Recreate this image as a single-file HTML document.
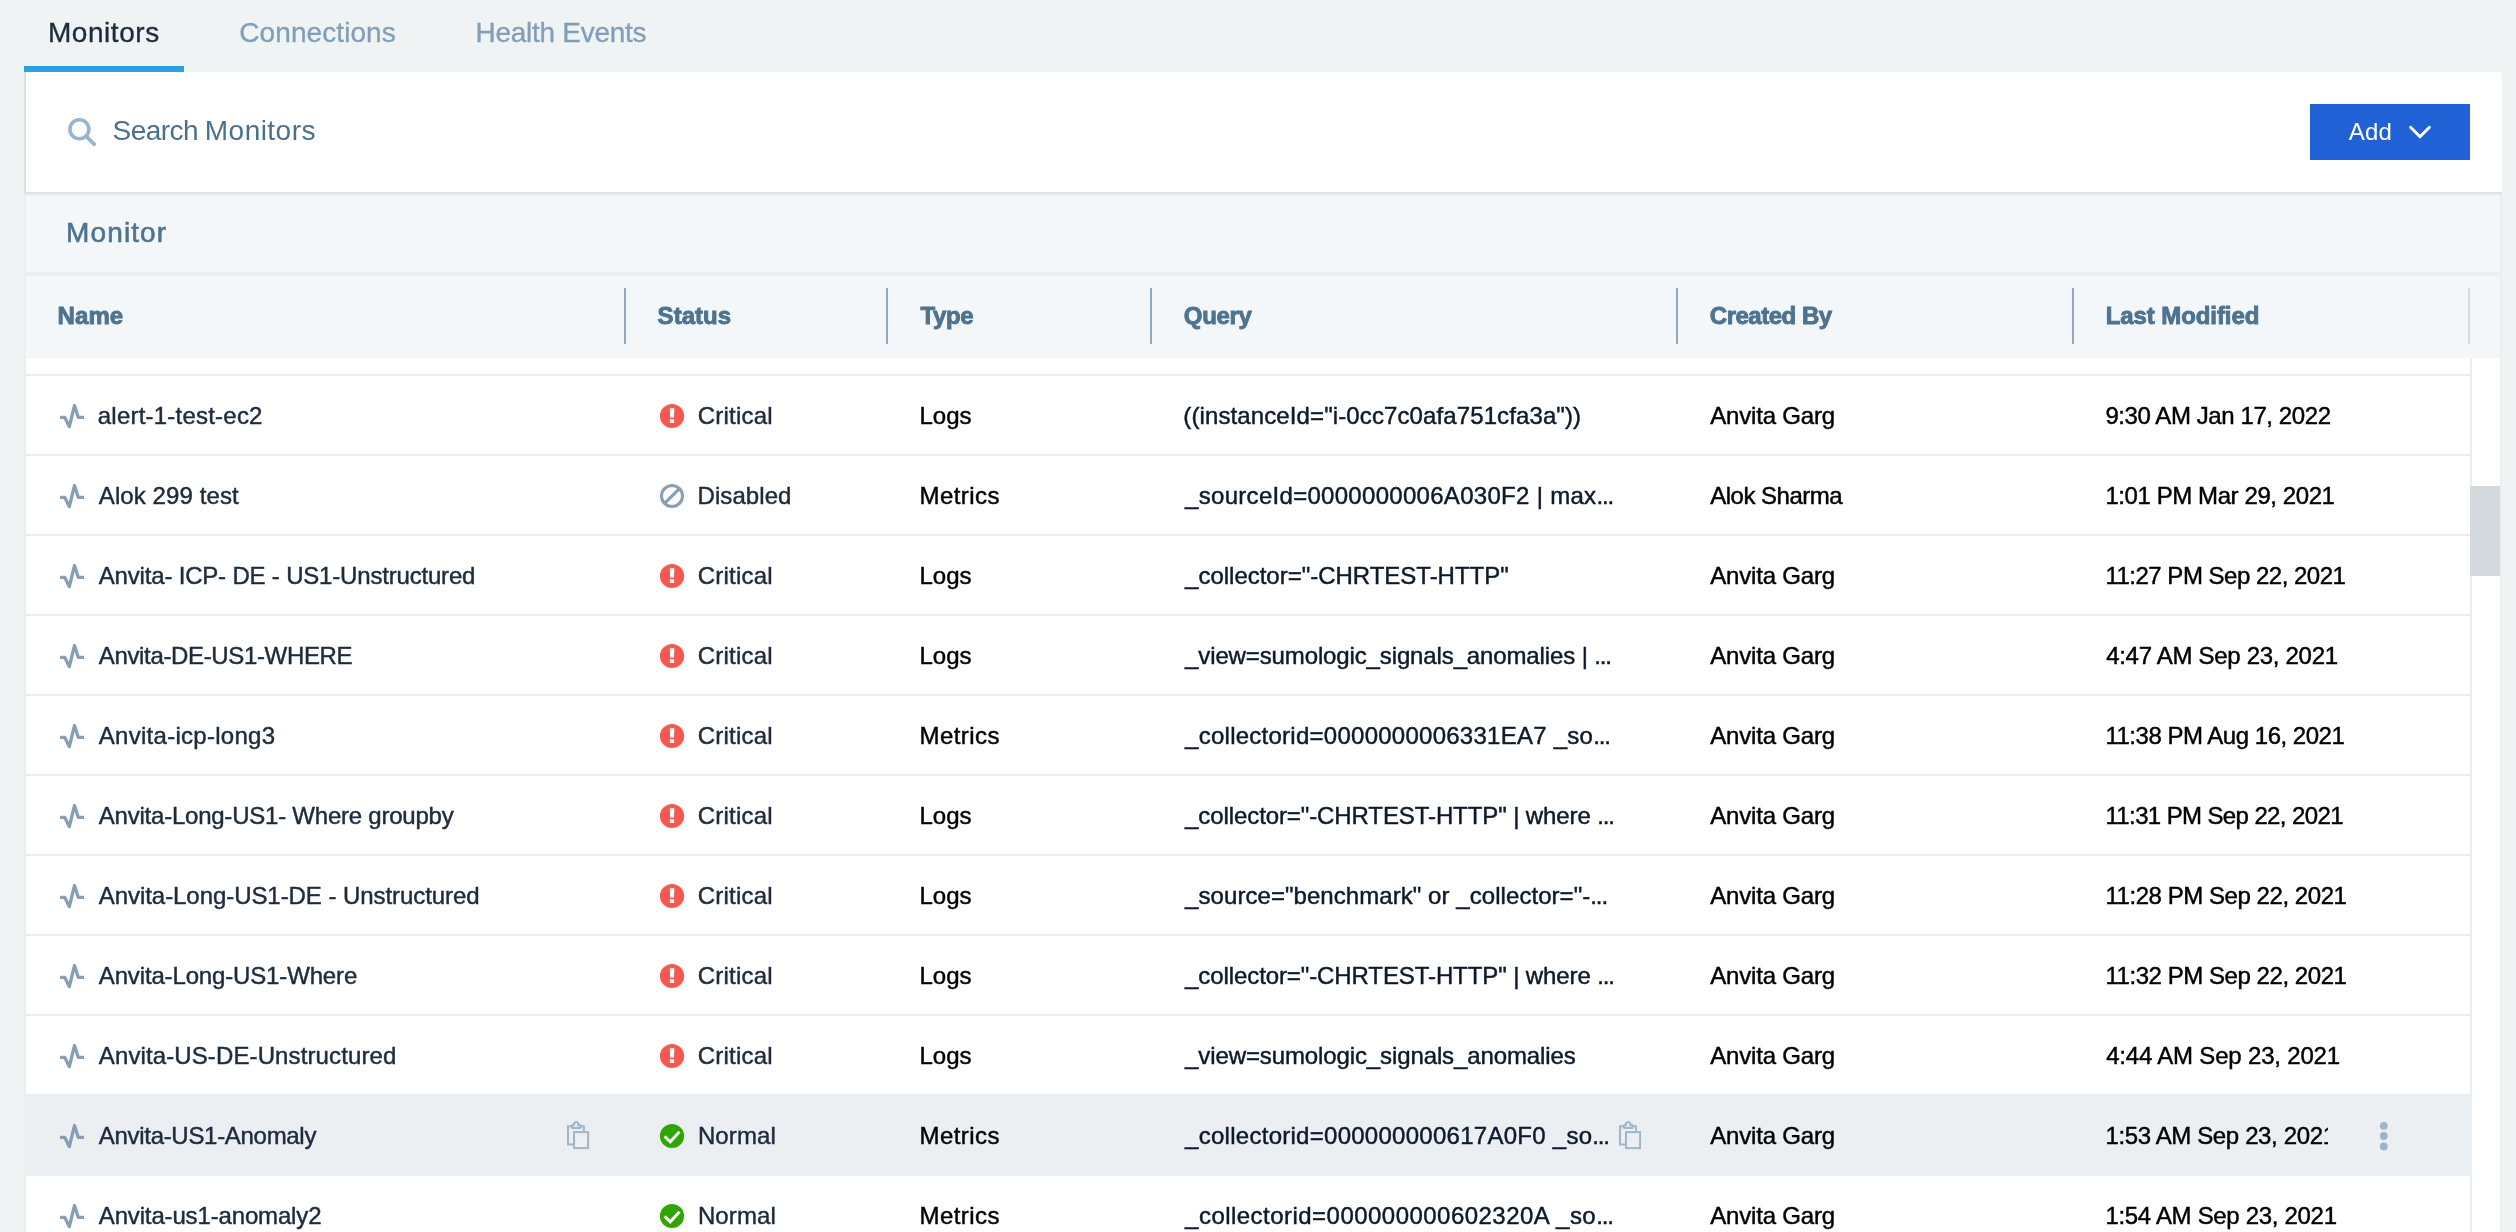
<!DOCTYPE html>
<html><head><meta charset="utf-8"><title>Monitors</title>
<style>
html,body{margin:0;padding:0}
body{width:2516px;height:1232px;overflow:hidden;background:#eff3f4;position:relative;font-family:"Liberation Sans",sans-serif}
.t{position:absolute;line-height:1;white-space:pre;font-weight:400}
.b{font-weight:700}
.abs,.ic,.rl{position:absolute}
.rl{left:26px;width:2444px;height:2px;background:#e8edf2}
.sep{position:absolute;top:288px;width:2px;height:56px;background:#8fa9bf}
</style></head><body>
<div class="abs" style="left:24px;top:66px;width:160px;height:6px;background:#2b9fe5"></div>
<div class="abs" style="left:24px;top:72px;width:2476px;height:120px;background:#fff;border-left:2px solid #dbe2ea;border-bottom:2px solid #dbe2ea;border-radius:0 4px 0 0"></div>
<div class="abs" style="left:24px;top:194px;width:2474px;height:1040px;background:#fff;border:2px solid #ebeff2"></div>
<div class="abs" style="left:26px;top:196px;width:2474px;height:76px;background:#f4f7fa"></div>
<div class="abs" style="left:26px;top:272px;width:2474px;height:4px;background:#e9eef2"></div>
<div class="abs" style="left:26px;top:276px;width:2444px;height:82px;background:#f4f7fa"></div>
<div class="abs" style="left:2470px;top:276px;width:30px;height:82px;background:#f4f6f7"></div>
<div class="abs" style="left:2470px;top:358px;width:2px;height:874px;background:#e9eef2"></div>
<div class="abs" style="left:2470px;top:486px;width:30px;height:90px;background:#d4d9de"></div>
<div class="rl" style="top:374px"></div><div class="rl" style="top:454px"></div><div class="rl" style="top:534px"></div><div class="rl" style="top:614px"></div><div class="rl" style="top:694px"></div><div class="rl" style="top:774px"></div><div class="rl" style="top:854px"></div><div class="rl" style="top:934px"></div><div class="rl" style="top:1014px"></div>
<div class="abs" style="left:26px;top:1094px;width:2444px;height:82px;background:#ebeff2"></div>
<div class="sep" style="left:624px"></div><div class="sep" style="left:886px"></div><div class="sep" style="left:1150px"></div><div class="sep" style="left:1676px"></div><div class="sep" style="left:2072px"></div>
<div class="sep" style="left:2468px;background:#d5dce2"></div>
<div class="abs" style="left:2310px;top:104px;width:160px;height:56px;background:#2062d6"></div>
<svg class="ic" style="left:2404px;top:120px" width="32" height="24" viewBox="0 0 32 24"><path d="M6.6 7.3L16 16.7L25.4 7.3" fill="none" stroke="#fff" stroke-width="3" stroke-linecap="round" stroke-linejoin="round"/></svg>
<svg class="ic" style="left:64px;top:114px" width="36" height="36" viewBox="0 0 36 36"><circle cx="15.4" cy="15.3" r="9.5" fill="none" stroke="#9cb4ca" stroke-width="3.6"/><path d="M22.3 22.3L30.1 30.1" stroke="#9cb4ca" stroke-width="3.9" stroke-linecap="round"/></svg>
<svg class="ic" style="left:60px;top:404px" width="24" height="25" viewBox="0 0 24 25"><path d="M0 13.4H4.8L9.3 22.6L14.5 1.6L18.3 13.4H24" fill="none" stroke="#879fb6" stroke-width="3.35" stroke-linejoin="round"/></svg>
<svg class="ic" style="left:659px;top:403px" width="26" height="26" viewBox="0 0 26 26"><circle cx="13" cy="13" r="12.1" fill="#f5584f"/><path d="M10.8 5.3h4.6l-.45 9.3h-3.7z M10.9 16.2h4.3v3.7h-4.3z" fill="#fff"/></svg>
<svg class="ic" style="left:60px;top:484px" width="24" height="25" viewBox="0 0 24 25"><path d="M0 13.4H4.8L9.3 22.6L14.5 1.6L18.3 13.4H24" fill="none" stroke="#879fb6" stroke-width="3.35" stroke-linejoin="round"/></svg>
<svg class="ic" style="left:659px;top:483px" width="26" height="26" viewBox="0 0 26 26"><circle cx="13" cy="13" r="10.55" fill="none" stroke="#879fb7" stroke-width="3.1"/><path d="M5.6 20.4L20.4 5.6" stroke="#879fb7" stroke-width="3.1"/></svg>
<svg class="ic" style="left:60px;top:564px" width="24" height="25" viewBox="0 0 24 25"><path d="M0 13.4H4.8L9.3 22.6L14.5 1.6L18.3 13.4H24" fill="none" stroke="#879fb6" stroke-width="3.35" stroke-linejoin="round"/></svg>
<svg class="ic" style="left:659px;top:563px" width="26" height="26" viewBox="0 0 26 26"><circle cx="13" cy="13" r="12.1" fill="#f5584f"/><path d="M10.8 5.3h4.6l-.45 9.3h-3.7z M10.9 16.2h4.3v3.7h-4.3z" fill="#fff"/></svg>
<svg class="ic" style="left:60px;top:644px" width="24" height="25" viewBox="0 0 24 25"><path d="M0 13.4H4.8L9.3 22.6L14.5 1.6L18.3 13.4H24" fill="none" stroke="#879fb6" stroke-width="3.35" stroke-linejoin="round"/></svg>
<svg class="ic" style="left:659px;top:643px" width="26" height="26" viewBox="0 0 26 26"><circle cx="13" cy="13" r="12.1" fill="#f5584f"/><path d="M10.8 5.3h4.6l-.45 9.3h-3.7z M10.9 16.2h4.3v3.7h-4.3z" fill="#fff"/></svg>
<svg class="ic" style="left:60px;top:724px" width="24" height="25" viewBox="0 0 24 25"><path d="M0 13.4H4.8L9.3 22.6L14.5 1.6L18.3 13.4H24" fill="none" stroke="#879fb6" stroke-width="3.35" stroke-linejoin="round"/></svg>
<svg class="ic" style="left:659px;top:723px" width="26" height="26" viewBox="0 0 26 26"><circle cx="13" cy="13" r="12.1" fill="#f5584f"/><path d="M10.8 5.3h4.6l-.45 9.3h-3.7z M10.9 16.2h4.3v3.7h-4.3z" fill="#fff"/></svg>
<svg class="ic" style="left:60px;top:804px" width="24" height="25" viewBox="0 0 24 25"><path d="M0 13.4H4.8L9.3 22.6L14.5 1.6L18.3 13.4H24" fill="none" stroke="#879fb6" stroke-width="3.35" stroke-linejoin="round"/></svg>
<svg class="ic" style="left:659px;top:803px" width="26" height="26" viewBox="0 0 26 26"><circle cx="13" cy="13" r="12.1" fill="#f5584f"/><path d="M10.8 5.3h4.6l-.45 9.3h-3.7z M10.9 16.2h4.3v3.7h-4.3z" fill="#fff"/></svg>
<svg class="ic" style="left:60px;top:884px" width="24" height="25" viewBox="0 0 24 25"><path d="M0 13.4H4.8L9.3 22.6L14.5 1.6L18.3 13.4H24" fill="none" stroke="#879fb6" stroke-width="3.35" stroke-linejoin="round"/></svg>
<svg class="ic" style="left:659px;top:883px" width="26" height="26" viewBox="0 0 26 26"><circle cx="13" cy="13" r="12.1" fill="#f5584f"/><path d="M10.8 5.3h4.6l-.45 9.3h-3.7z M10.9 16.2h4.3v3.7h-4.3z" fill="#fff"/></svg>
<svg class="ic" style="left:60px;top:964px" width="24" height="25" viewBox="0 0 24 25"><path d="M0 13.4H4.8L9.3 22.6L14.5 1.6L18.3 13.4H24" fill="none" stroke="#879fb6" stroke-width="3.35" stroke-linejoin="round"/></svg>
<svg class="ic" style="left:659px;top:963px" width="26" height="26" viewBox="0 0 26 26"><circle cx="13" cy="13" r="12.1" fill="#f5584f"/><path d="M10.8 5.3h4.6l-.45 9.3h-3.7z M10.9 16.2h4.3v3.7h-4.3z" fill="#fff"/></svg>
<svg class="ic" style="left:60px;top:1044px" width="24" height="25" viewBox="0 0 24 25"><path d="M0 13.4H4.8L9.3 22.6L14.5 1.6L18.3 13.4H24" fill="none" stroke="#879fb6" stroke-width="3.35" stroke-linejoin="round"/></svg>
<svg class="ic" style="left:659px;top:1043px" width="26" height="26" viewBox="0 0 26 26"><circle cx="13" cy="13" r="12.1" fill="#f5584f"/><path d="M10.8 5.3h4.6l-.45 9.3h-3.7z M10.9 16.2h4.3v3.7h-4.3z" fill="#fff"/></svg>
<svg class="ic" style="left:60px;top:1124px" width="24" height="25" viewBox="0 0 24 25"><path d="M0 13.4H4.8L9.3 22.6L14.5 1.6L18.3 13.4H24" fill="none" stroke="#879fb6" stroke-width="3.35" stroke-linejoin="round"/></svg>
<svg class="ic" style="left:659px;top:1123px" width="26" height="26" viewBox="0 0 26 26"><circle cx="13" cy="13" r="12.1" fill="#2fa500"/><path d="M5.6 13.4L11.3 18.8L20.5 8.8" fill="none" stroke="#ebeff3" stroke-width="3"/></svg>
<svg class="ic" style="left:60px;top:1204px" width="24" height="25" viewBox="0 0 24 25"><path d="M0 13.4H4.8L9.3 22.6L14.5 1.6L18.3 13.4H24" fill="none" stroke="#879fb6" stroke-width="3.35" stroke-linejoin="round"/></svg>
<svg class="ic" style="left:659px;top:1203px" width="26" height="26" viewBox="0 0 26 26"><circle cx="13" cy="13" r="12.1" fill="#2fa500"/><path d="M5.6 13.4L11.3 18.8L20.5 8.8" fill="none" stroke="#fff" stroke-width="3"/></svg>
<svg class="ic" style="left:566px;top:1120px" width="24" height="30" viewBox="0 0 24 30"><g fill="none" stroke="#9fb5ca" stroke-width="2"><path d="M6 6.2H2V24.4H7"/><path d="M14.6 6.2H17.9V11.1"/><path d="M6.1 7.9V5.3H8A2.3 2.3 0 1 1 12.2 5.3H14.5V7.9Z" stroke-linejoin="round"/><rect x="8" y="12.1" width="14.1" height="16"/></g></svg><svg class="ic" style="left:1618px;top:1120px" width="24" height="30" viewBox="0 0 24 30"><g fill="none" stroke="#9fb5ca" stroke-width="2"><path d="M6 6.2H2V24.4H7"/><path d="M14.6 6.2H17.9V11.1"/><path d="M6.1 7.9V5.3H8A2.3 2.3 0 1 1 12.2 5.3H14.5V7.9Z" stroke-linejoin="round"/><rect x="8" y="12.1" width="14.1" height="16"/></g></svg>
<svg class="ic" style="left:2376px;top:1120px" width="16" height="32" viewBox="0 0 16 32"><g fill="#9db4c9"><circle cx="7.8" cy="5.8" r="3.9"/><circle cx="7.8" cy="16" r="3.9"/><circle cx="7.8" cy="26.4" r="3.9"/></g></svg>
<div class="abs" style="left:0;top:0;width:2516px;height:1232px;will-change:transform">
<span class="t" style="left:47.9px;top:19.0px;font-size:28px;letter-spacing:0.557px;color:#1d2b3c;-webkit-text-stroke:0.35px #1d2b3c">Monitors</span>
<span class="t" style="left:239.3px;top:19.0px;font-size:28px;letter-spacing:0.080px;color:#839eb7;-webkit-text-stroke:0.35px #839eb7">Connections</span>
<span class="t" style="left:475.6px;top:19.0px;font-size:28px;letter-spacing:-0.283px;color:#839eb7;-webkit-text-stroke:0.35px #839eb7">Health Events</span>
<span class="t" style="left:112.5px;top:117.0px;font-size:28px;letter-spacing:-0.510px;color:#49708f">Search</span>
<span class="t" style="left:204.8px;top:117.0px;font-size:28px;letter-spacing:0.471px;color:#49708f">Monitors</span>
<span class="t" style="left:2348.8px;top:120.0px;font-size:24px;letter-spacing:0.125px;color:#ffffff">Add</span>
<span class="t" style="left:66.1px;top:219.0px;font-size:28px;letter-spacing:1.108px;color:#4e738f;-webkit-text-stroke:0.6px #4e738f">Monitor</span>
<span class="t b" style="left:57.6px;top:304.2px;font-size:24px;letter-spacing:0.083px;color:#4e738f;-webkit-text-stroke:0.9px #4e738f">Name</span>
<span class="t b" style="left:657.6px;top:304.2px;font-size:24px;letter-spacing:0.040px;color:#4e738f;-webkit-text-stroke:0.9px #4e738f">Status</span>
<span class="t b" style="left:920.5px;top:304.2px;font-size:24px;letter-spacing:-0.367px;color:#4e738f;-webkit-text-stroke:0.9px #4e738f">Type</span>
<span class="t b" style="left:1183.8px;top:304.2px;font-size:24px;letter-spacing:-0.312px;color:#4e738f;-webkit-text-stroke:0.9px #4e738f">Query</span>
<span class="t b" style="left:1709.8px;top:304.2px;font-size:24px;letter-spacing:-0.494px;color:#4e738f;-webkit-text-stroke:0.9px #4e738f">Created By</span>
<span class="t b" style="left:2105.7px;top:304.2px;font-size:24px;letter-spacing:-0.088px;color:#4e738f;-webkit-text-stroke:0.9px #4e738f">Last Modified</span>
<span class="t" style="left:97.8px;top:404.0px;font-size:24px;letter-spacing:0.217px;color:#1d2b3c;-webkit-text-stroke:0.45px #1d2b3c">alert-1-test-ec2</span>
<span class="t" style="left:697.8px;top:404.0px;font-size:24px;letter-spacing:0.200px;color:#1d2b3c;-webkit-text-stroke:0.45px #1d2b3c">Critical</span>
<span class="t" style="left:919.5px;top:404.0px;font-size:24px;letter-spacing:-0.017px;color:#000;-webkit-text-stroke:0.45px #000">Logs</span>
<span class="t" style="left:1183.3px;top:404.0px;font-size:24px;letter-spacing:0.111px;color:#0d1a2b;-webkit-text-stroke:0.45px #0d1a2b">((instanceId="i-0cc7c0afa751cfa3a"))</span>
<span class="t" style="left:1710.2px;top:404.0px;font-size:24px;letter-spacing:-0.175px;color:#000;-webkit-text-stroke:0.45px #000">Anvita Garg</span>
<span class="t" style="left:2105.4px;top:404.0px;font-size:24px;letter-spacing:-0.416px;color:#000;-webkit-text-stroke:0.45px #000">9:30 AM Jan 17, 2022</span>
<span class="t" style="left:98.8px;top:484.0px;font-size:24px;letter-spacing:0.092px;color:#1d2b3c;-webkit-text-stroke:0.45px #1d2b3c">Alok 299 test</span>
<span class="t" style="left:697.5px;top:484.0px;font-size:24px;letter-spacing:0.079px;color:#1d2b3c;-webkit-text-stroke:0.45px #1d2b3c">Disabled</span>
<span class="t" style="left:919.5px;top:484.0px;font-size:24px;letter-spacing:0.450px;color:#000;-webkit-text-stroke:0.45px #000">Metrics</span>
<span class="t" style="left:1185.1px;top:484.0px;font-size:24px;letter-spacing:0.294px;color:#0d1a2b;-webkit-text-stroke:0.45px #0d1a2b">_sourceId=0000000006A030F2 | max<span style="letter-spacing:-1.15px">...</span></span>
<span class="t" style="left:1710.2px;top:484.0px;font-size:24px;letter-spacing:-0.500px;color:#000;-webkit-text-stroke:0.45px #000">Alok Sharma</span>
<span class="t" style="left:2105.4px;top:484.0px;font-size:24px;letter-spacing:-0.416px;color:#000;-webkit-text-stroke:0.45px #000">1:01 PM Mar 29, 2021</span>
<span class="t" style="left:98.8px;top:564.0px;font-size:24px;letter-spacing:-0.186px;color:#1d2b3c;-webkit-text-stroke:0.45px #1d2b3c">Anvita- ICP- DE - US1-Unstructured</span>
<span class="t" style="left:697.8px;top:564.0px;font-size:24px;letter-spacing:0.200px;color:#1d2b3c;-webkit-text-stroke:0.45px #1d2b3c">Critical</span>
<span class="t" style="left:919.5px;top:564.0px;font-size:24px;letter-spacing:-0.017px;color:#000;-webkit-text-stroke:0.45px #000">Logs</span>
<span class="t" style="left:1185.1px;top:564.0px;font-size:24px;letter-spacing:-0.014px;color:#0d1a2b;-webkit-text-stroke:0.45px #0d1a2b">_collector="-CHRTEST-HTTP"</span>
<span class="t" style="left:1710.2px;top:564.0px;font-size:24px;letter-spacing:-0.175px;color:#000;-webkit-text-stroke:0.45px #000">Anvita Garg</span>
<span class="t" style="left:2105.4px;top:564.0px;font-size:24px;letter-spacing:-0.495px;color:#000;-webkit-text-stroke:0.45px #000">11:27 PM Sep 22, 2021</span>
<span class="t" style="left:98.8px;top:644.0px;font-size:24px;letter-spacing:-0.350px;color:#1d2b3c;-webkit-text-stroke:0.45px #1d2b3c">Anvita-DE-US1-WHERE</span>
<span class="t" style="left:697.8px;top:644.0px;font-size:24px;letter-spacing:0.200px;color:#1d2b3c;-webkit-text-stroke:0.45px #1d2b3c">Critical</span>
<span class="t" style="left:919.5px;top:644.0px;font-size:24px;letter-spacing:-0.017px;color:#000;-webkit-text-stroke:0.45px #000">Logs</span>
<span class="t" style="left:1185.1px;top:644.0px;font-size:24px;letter-spacing:-0.128px;color:#0d1a2b;-webkit-text-stroke:0.45px #0d1a2b">_view=sumologic_signals_anomalies | <span style="letter-spacing:-1.15px">...</span></span>
<span class="t" style="left:1710.2px;top:644.0px;font-size:24px;letter-spacing:-0.175px;color:#000;-webkit-text-stroke:0.45px #000">Anvita Garg</span>
<span class="t" style="left:2106.2px;top:644.0px;font-size:24px;letter-spacing:-0.297px;color:#000;-webkit-text-stroke:0.45px #000">4:47 AM Sep 23, 2021</span>
<span class="t" style="left:98.8px;top:724.0px;font-size:24px;letter-spacing:0.280px;color:#1d2b3c;-webkit-text-stroke:0.45px #1d2b3c">Anvita-icp-long3</span>
<span class="t" style="left:697.8px;top:724.0px;font-size:24px;letter-spacing:0.200px;color:#1d2b3c;-webkit-text-stroke:0.45px #1d2b3c">Critical</span>
<span class="t" style="left:919.5px;top:724.0px;font-size:24px;letter-spacing:0.450px;color:#000;-webkit-text-stroke:0.45px #000">Metrics</span>
<span class="t" style="left:1185.1px;top:724.0px;font-size:24px;letter-spacing:0.255px;color:#0d1a2b;-webkit-text-stroke:0.45px #0d1a2b">_collectorid=0000000006331EA7 _so<span style="letter-spacing:-1.15px">...</span></span>
<span class="t" style="left:1710.2px;top:724.0px;font-size:24px;letter-spacing:-0.175px;color:#000;-webkit-text-stroke:0.45px #000">Anvita Garg</span>
<span class="t" style="left:2105.4px;top:724.0px;font-size:24px;letter-spacing:-0.483px;color:#000;-webkit-text-stroke:0.45px #000">11:38 PM Aug 16, 2021</span>
<span class="t" style="left:98.8px;top:804.0px;font-size:24px;letter-spacing:-0.228px;color:#1d2b3c;-webkit-text-stroke:0.45px #1d2b3c">Anvita-Long-US1- Where groupby</span>
<span class="t" style="left:697.8px;top:804.0px;font-size:24px;letter-spacing:0.200px;color:#1d2b3c;-webkit-text-stroke:0.45px #1d2b3c">Critical</span>
<span class="t" style="left:919.5px;top:804.0px;font-size:24px;letter-spacing:-0.017px;color:#000;-webkit-text-stroke:0.45px #000">Logs</span>
<span class="t" style="left:1185.1px;top:804.0px;font-size:24px;letter-spacing:-0.096px;color:#0d1a2b;-webkit-text-stroke:0.45px #0d1a2b">_collector="-CHRTEST-HTTP" | where <span style="letter-spacing:-1.15px">...</span></span>
<span class="t" style="left:1710.2px;top:804.0px;font-size:24px;letter-spacing:-0.175px;color:#000;-webkit-text-stroke:0.45px #000">Anvita Garg</span>
<span class="t" style="left:2105.4px;top:804.0px;font-size:24px;letter-spacing:-0.615px;color:#000;-webkit-text-stroke:0.45px #000">11:31 PM Sep 22, 2021</span>
<span class="t" style="left:98.8px;top:884.0px;font-size:24px;letter-spacing:-0.061px;color:#1d2b3c;-webkit-text-stroke:0.45px #1d2b3c">Anvita-Long-US1-DE - Unstructured</span>
<span class="t" style="left:697.8px;top:884.0px;font-size:24px;letter-spacing:0.200px;color:#1d2b3c;-webkit-text-stroke:0.45px #1d2b3c">Critical</span>
<span class="t" style="left:919.5px;top:884.0px;font-size:24px;letter-spacing:-0.017px;color:#000;-webkit-text-stroke:0.45px #000">Logs</span>
<span class="t" style="left:1185.1px;top:884.0px;font-size:24px;letter-spacing:0.060px;color:#0d1a2b;-webkit-text-stroke:0.45px #0d1a2b">_source="benchmark" or _collector="-<span style="letter-spacing:-1.15px">...</span></span>
<span class="t" style="left:1710.2px;top:884.0px;font-size:24px;letter-spacing:-0.175px;color:#000;-webkit-text-stroke:0.45px #000">Anvita Garg</span>
<span class="t" style="left:2105.4px;top:884.0px;font-size:24px;letter-spacing:-0.445px;color:#000;-webkit-text-stroke:0.45px #000">11:28 PM Sep 22, 2021</span>
<span class="t" style="left:98.8px;top:964.0px;font-size:24px;letter-spacing:-0.150px;color:#1d2b3c;-webkit-text-stroke:0.45px #1d2b3c">Anvita-Long-US1-Where</span>
<span class="t" style="left:697.8px;top:964.0px;font-size:24px;letter-spacing:0.200px;color:#1d2b3c;-webkit-text-stroke:0.45px #1d2b3c">Critical</span>
<span class="t" style="left:919.5px;top:964.0px;font-size:24px;letter-spacing:-0.017px;color:#000;-webkit-text-stroke:0.45px #000">Logs</span>
<span class="t" style="left:1185.1px;top:964.0px;font-size:24px;letter-spacing:-0.096px;color:#0d1a2b;-webkit-text-stroke:0.45px #0d1a2b">_collector="-CHRTEST-HTTP" | where <span style="letter-spacing:-1.15px">...</span></span>
<span class="t" style="left:1710.2px;top:964.0px;font-size:24px;letter-spacing:-0.175px;color:#000;-webkit-text-stroke:0.45px #000">Anvita Garg</span>
<span class="t" style="left:2105.4px;top:964.0px;font-size:24px;letter-spacing:-0.445px;color:#000;-webkit-text-stroke:0.45px #000">11:32 PM Sep 22, 2021</span>
<span class="t" style="left:98.8px;top:1044.0px;font-size:24px;letter-spacing:0.115px;color:#1d2b3c;-webkit-text-stroke:0.45px #1d2b3c">Anvita-US-DE-Unstructured</span>
<span class="t" style="left:697.8px;top:1044.0px;font-size:24px;letter-spacing:0.200px;color:#1d2b3c;-webkit-text-stroke:0.45px #1d2b3c">Critical</span>
<span class="t" style="left:919.5px;top:1044.0px;font-size:24px;letter-spacing:-0.017px;color:#000;-webkit-text-stroke:0.45px #000">Logs</span>
<span class="t" style="left:1185.1px;top:1044.0px;font-size:24px;letter-spacing:-0.112px;color:#0d1a2b;-webkit-text-stroke:0.45px #0d1a2b">_view=sumologic_signals_anomalies</span>
<span class="t" style="left:1710.2px;top:1044.0px;font-size:24px;letter-spacing:-0.175px;color:#000;-webkit-text-stroke:0.45px #000">Anvita Garg</span>
<span class="t" style="left:2106.2px;top:1044.0px;font-size:24px;letter-spacing:-0.192px;color:#000;-webkit-text-stroke:0.45px #000">4:44 AM Sep 23, 2021</span>
<span class="t" style="left:98.8px;top:1124.0px;font-size:24px;letter-spacing:-0.303px;color:#1d2b3c;-webkit-text-stroke:0.45px #1d2b3c">Anvita-US1-Anomaly</span>
<span class="t" style="left:697.9px;top:1124.0px;font-size:24px;letter-spacing:0.110px;color:#1d2b3c;-webkit-text-stroke:0.45px #1d2b3c">Normal</span>
<span class="t" style="left:919.5px;top:1124.0px;font-size:24px;letter-spacing:0.450px;color:#000;-webkit-text-stroke:0.45px #000">Metrics</span>
<span class="t" style="left:1185.1px;top:1124.0px;font-size:24px;letter-spacing:0.270px;color:#0d1a2b;-webkit-text-stroke:0.45px #0d1a2b">_collectorid=000000000617A0F0 _so<span style="letter-spacing:-1.15px">...</span></span>
<span class="t" style="left:1710.2px;top:1124.0px;font-size:24px;letter-spacing:-0.175px;color:#000;-webkit-text-stroke:0.45px #000">Anvita Garg</span>
<span class="t" style="left:2105.4px;top:1124.0px;font-size:24px;letter-spacing:-0.363px;color:#000;-webkit-text-stroke:0.45px #000;width:222.6px;overflow:hidden;height:30px">1:53 AM Sep 23, 2021</span>
<span class="t" style="left:98.8px;top:1204.0px;font-size:24px;letter-spacing:-0.153px;color:#1d2b3c;-webkit-text-stroke:0.45px #1d2b3c">Anvita-us1-anomaly2</span>
<span class="t" style="left:697.9px;top:1204.0px;font-size:24px;letter-spacing:0.110px;color:#1d2b3c;-webkit-text-stroke:0.45px #1d2b3c">Normal</span>
<span class="t" style="left:919.5px;top:1204.0px;font-size:24px;letter-spacing:0.450px;color:#000;-webkit-text-stroke:0.45px #000">Metrics</span>
<span class="t" style="left:1185.1px;top:1204.0px;font-size:24px;letter-spacing:0.467px;color:#0d1a2b;-webkit-text-stroke:0.45px #0d1a2b">_collectorid=000000000602320A _so<span style="letter-spacing:-1.15px">...</span></span>
<span class="t" style="left:1710.2px;top:1204.0px;font-size:24px;letter-spacing:-0.175px;color:#000;-webkit-text-stroke:0.45px #000">Anvita Garg</span>
<span class="t" style="left:2105.4px;top:1204.0px;font-size:24px;letter-spacing:-0.311px;color:#000;-webkit-text-stroke:0.45px #000">1:54 AM Sep 23, 2021</span>
</div>
</body></html>
